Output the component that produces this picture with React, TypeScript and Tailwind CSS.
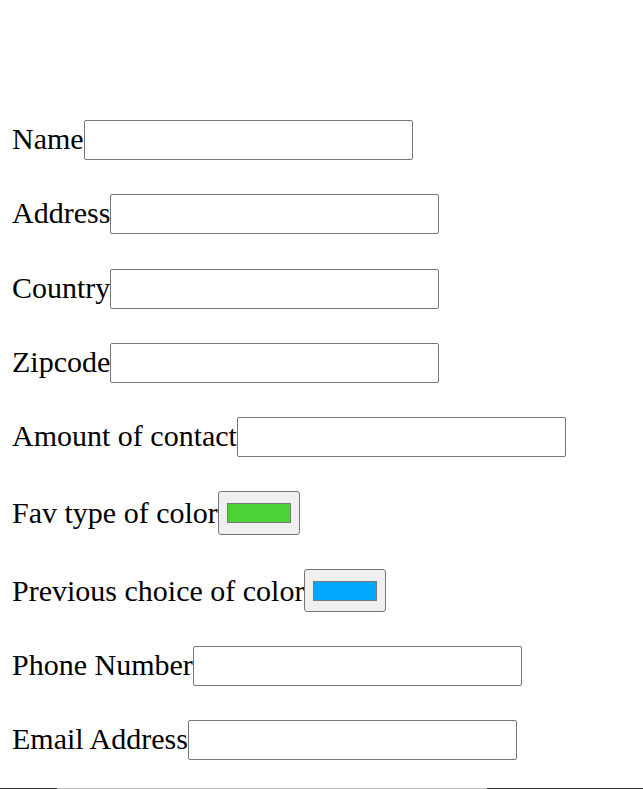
import React from 'react';

const textFields = {
  before: ['Name', 'Address', 'Country', 'Zipcode', 'Amount of contact'],
  after: ['Phone Number', 'Email Address'],
};

function TextRow({ label, className = '' }: { label: string; className?: string }) {
  return (
    <div className={`flex items-center h-[40px] ${className}`}>
      <label className="leading-[34px] pb-[2px]">{label}</label>
      <input
        type="text"
        className="w-[329px] h-[40px] border border-[#767676] rounded-[2px] bg-white outline-none"
      />
    </div>
  );
}

function ColorRow({ label, color, h }: { label: string; color: string; h: string }) {
  return (
    <div className={`flex items-center ${h}`}>
      <label className="leading-[34px]">{label}</label>
      <button
        type="button"
        className={`w-[82px] ${h} border border-[#767676] rounded-[3px] bg-[#efefef] flex items-center justify-center`}
      >
        <span className="block w-[64px] h-[20px] border border-[#777777]" style={{ backgroundColor: color }} />
      </button>
    </div>
  );
}

export default function App() {
  return (
    <div className="bg-white min-h-[789px] font-['Liberation_Serif',serif] text-[30px] text-black">
      <form className="flex flex-col pt-[120px] pl-[12px]">
        <TextRow label={textFields.before[0]} />
        <TextRow label={textFields.before[1]} className="mt-[34px]" />
        <TextRow label={textFields.before[2]} className="mt-[35px]" />
        <TextRow label={textFields.before[3]} className="mt-[34px]" />
        <TextRow label={textFields.before[4]} className="mt-[34px]" />
        <div className="mt-[34px]">
          <ColorRow label="Fav type of color" color="#4cd137" h="h-[44px]" />
        </div>
        <div className="mt-[34px]">
          <ColorRow label="Previous choice of color" color="#00a8ff" h="h-[43px]" />
        </div>
        <TextRow label={textFields.after[0]} className="mt-[34px]" />
        <TextRow label={textFields.after[1]} className="mt-[34px]" />
      </form>
      <div className="flex mt-[28px] h-[1px]">
        <div className="w-[57px] bg-[#2f3136]" />
        <div className="w-[430px] bg-[#bdbdbd]" />
        <div className="flex-1 bg-[#2f3136]" />
      </div>
    </div>
  );
}
